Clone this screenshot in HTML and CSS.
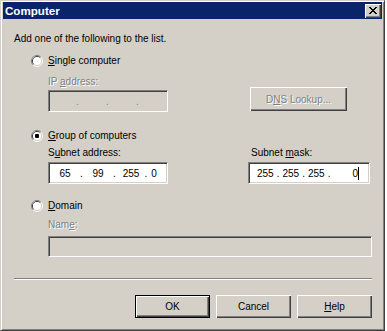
FILE: index.html
```html
<!DOCTYPE html>
<html>
<head>
<meta charset="utf-8">
<title>Computer</title>
<link rel="stylesheet" href="styles.css">
</head>
<body>
<div class="window">
  <div class="titlebar">
    <span class="title">Computer</span>
    <div class="close">
      <svg width="16" height="14" viewBox="0 0 16 14" shape-rendering="crispEdges">
        <g fill="#000">
          <rect x="4" y="3" width="2" height="1"/><rect x="10" y="3" width="2" height="1"/>
          <rect x="5" y="4" width="2" height="1"/><rect x="9" y="4" width="2" height="1"/>
          <rect x="6" y="5" width="4" height="1"/>
          <rect x="7" y="6" width="2" height="1"/>
          <rect x="6" y="7" width="4" height="1"/>
          <rect x="5" y="8" width="2" height="1"/><rect x="9" y="8" width="2" height="1"/>
          <rect x="4" y="9" width="2" height="1"/><rect x="10" y="9" width="2" height="1"/>
        </g>
      </svg>
    </div>
  </div>
  <div class="body">
    <p class="intro">Add one of the following to the list.</p>

    <div class="option opt-single">
      <svg class="radio" width="12" height="12" viewBox="0 0 12 12">
        <path d="M2.11 9.89 A5.5 5.5 0 0 1 9.89 2.11" fill="none" stroke="#808080"/>
        <path d="M9.89 2.11 A5.5 5.5 0 0 1 2.11 9.89" fill="none" stroke="#fff"/>
        <path d="M2.82 9.18 A4.5 4.5 0 0 1 9.18 2.82" fill="none" stroke="#404040"/>
        <path d="M9.18 2.82 A4.5 4.5 0 0 1 2.82 9.18" fill="none" stroke="#d4d0c8"/>
        <circle cx="6" cy="6" r="4" fill="#fff"/>
      </svg>
      <span class="label"><u>S</u>ingle computer</span>
    </div>

    <div class="sub ip-row">
      <div class="col">
        <span class="label disabled">IP <u>a</u>ddress:</span>
        <div class="field disabled ip-field">
          <span class="oct o21"></span><span class="dot d9 dim">.</span>
          <span class="oct o21"></span><span class="dot d9 dim">.</span>
          <span class="oct o21"></span><span class="dot d9 dim">.</span>
          <span class="oct o21"></span>
        </div>
      </div>
      <div class="btn dns"><span class="disabled">D<u>N</u>S Lookup...</span></div>
    </div>

    <div class="option opt-group">
      <svg class="radio" width="12" height="12" viewBox="0 0 12 12">
        <path d="M2.11 9.89 A5.5 5.5 0 0 1 9.89 2.11" fill="none" stroke="#808080"/>
        <path d="M9.89 2.11 A5.5 5.5 0 0 1 2.11 9.89" fill="none" stroke="#fff"/>
        <path d="M2.82 9.18 A4.5 4.5 0 0 1 9.18 2.82" fill="none" stroke="#404040"/>
        <path d="M9.18 2.82 A4.5 4.5 0 0 1 2.82 9.18" fill="none" stroke="#d4d0c8"/>
        <circle cx="6" cy="6" r="4" fill="#fff"/>
        <rect x="4" y="4" width="4" height="4" rx="1" fill="#000"/>
      </svg>
      <span class="label"><u>G</u>roup of computers</span>
    </div>

    <div class="sub subnet-row">
      <div class="col addr-col">
        <span class="label">S<u>u</u>bnet address:</span>
        <div class="field addr-field">
          <span class="oct o24">65</span><span class="dot d9">.</span>
          <span class="oct o24">99</span><span class="dot d9">.</span>
          <span class="oct o24">255</span><span class="dot d6">.</span>
          <span class="oct o10">0</span>
        </div>
      </div>
      <div class="col mask-col">
        <span class="label mask-label">Subnet <u>m</u>ask:</span>
        <div class="field mask-field">
          <span class="oct">255</span><span class="dot sp">.</span>
          <span class="oct">255</span><span class="dot sp">.</span>
          <span class="oct">255</span><span class="dot sp">.</span>
          <span class="oct last">0</span><span class="caret"></span>
        </div>
      </div>
    </div>

    <div class="option opt-domain">
      <svg class="radio" width="12" height="12" viewBox="0 0 12 12">
        <path d="M2.11 9.89 A5.5 5.5 0 0 1 9.89 2.11" fill="none" stroke="#808080"/>
        <path d="M9.89 2.11 A5.5 5.5 0 0 1 2.11 9.89" fill="none" stroke="#fff"/>
        <path d="M2.82 9.18 A4.5 4.5 0 0 1 9.18 2.82" fill="none" stroke="#404040"/>
        <path d="M9.18 2.82 A4.5 4.5 0 0 1 2.82 9.18" fill="none" stroke="#d4d0c8"/>
        <circle cx="6" cy="6" r="4" fill="#fff"/>
      </svg>
      <span class="label"><u>D</u>omain</span>
    </div>

    <div class="sub name-block">
      <span class="label disabled">Nam<u>e</u>:</span>
      <div class="field disabled name-field"></div>
    </div>

    <div class="sep"></div>

    <div class="buttons">
      <div class="btn default">OK</div>
      <div class="btn">Cancel</div>
      <div class="btn"><span><u>H</u>elp</span></div>
    </div>
  </div>
</div>
</body>
</html>
```
FILE: styles.css
```css
body {
  margin: 0;
  background: #ffffff;
  font-family: "Liberation Sans", Arial, sans-serif;
  font-size: 10px;
  color: #000;
}

.window {
  width: 385px;
  height: 331px;
  box-sizing: border-box;
  background: #d4d0c8;
  border: 1px solid;
  border-color: #d4d0c8 #404040 #404040 #d4d0c8;
  box-shadow: inset 1px 1px #ffffff, inset -1px -1px #808080;
  padding: 1px 2px 2px 2px;
}

.titlebar {
  height: 17px;
  background: #0a246a;
  display: flex;
  align-items: center;
  justify-content: space-between;
  padding: 0 1px 0 2px;
}

.title {
  color: #fff;
  font-weight: bold;
  font-size: 11.6px;
  line-height: 14px;
}

.close {
  width: 16px;
  height: 14px;
  background: #d4d0c8;
  box-shadow: inset 1px 1px #fff, inset -1px -1px #404040, inset -2px -2px #808080;
  margin-top: 1px;
}
.close svg { display: block; }

.body {
  display: flex;
  flex-direction: column;
  padding: 0 10px 0 11px;
}

.intro {
  margin: 13px 0 0 0;
  line-height: 13px;
}

.label {
  line-height: 13px;
  white-space: nowrap;
}
.disabled {
  color: #808080;
  text-shadow: 1px 1px #ffffff;
}
.dim {
  color: #808080;
}

.option {
  display: flex;
  align-items: center;
  height: 13px;
  margin-left: 17px;
  gap: 5px;
}
.radio { display: block; }

.opt-single { margin-top: 9px; }
.opt-group { margin-top: 17px; }
.opt-domain { margin-top: 15px; }

.sub { margin-left: 34px; }

.col {
  display: flex;
  flex-direction: column;
}

.field {
  box-sizing: border-box;
  height: 22px;
  border: 1px solid;
  border-color: #808080 #ffffff #ffffff #808080;
  box-shadow: inset 1px 1px #404040, inset -1px -1px #d4d0c8;
  background: #ffffff;
  display: flex;
  align-items: center;
  line-height: 13px;
}
.field.disabled { background: #d4d0c8; text-shadow: none; }

.oct, .dot { display: block; flex: none; text-align: center; white-space: pre; }
.o10 { width: 10px; }
.o21 { width: 21px; }
.o24 { width: 24px; }
.d6 { width: 6px; }
.d9 { width: 9px; }
.dot.sp { padding: 0 3px; }
.oct.last { flex: 1; text-align: right; }

.caret {
  flex: none;
  width: 1px;
  height: 13px;
  background: #000;
}

.ip-row {
  margin-top: 8px;
  display: flex;
  align-items: flex-end;
}
.ip-row .col .field { margin-top: 2px; }
.ip-field { width: 120px; padding-left: 3px; }

.btn {
  box-sizing: border-box;
  width: 75px;
  height: 23px;
  background: #d4d0c8;
  box-shadow: inset 1px 1px #ffffff, inset -1px -1px #404040, inset -2px -2px #808080;
  display: flex;
  align-items: center;
  justify-content: center;
  line-height: 13px;
}
.btn.default {
  border: 1px solid #000;
}
.dns {
  width: 97px;
  height: 24px;
  margin-left: 82px;
  margin-bottom: 1px;
}

.subnet-row {
  margin-top: 4px;
  display: flex;
  gap: 80px;
}
.subnet-row .field { margin-top: 3px; }
.addr-field { width: 120px; padding-left: 4px; }
.mask-label { padding-left: 3px; }
.mask-field { width: 122px; padding: 0 10px 0 8px; }

.name-block {
  margin-top: 6px;
  display: flex;
  flex-direction: column;
}
.name-field {
  margin-top: 5px;
  height: 21px;
}

.sep {
  margin-top: 21px;
  height: 0;
  border-top: 1px solid #808080;
  border-bottom: 1px solid #ffffff;
}

.buttons {
  margin-top: 15px;
  display: flex;
  justify-content: flex-end;
  gap: 6px;
}
```
